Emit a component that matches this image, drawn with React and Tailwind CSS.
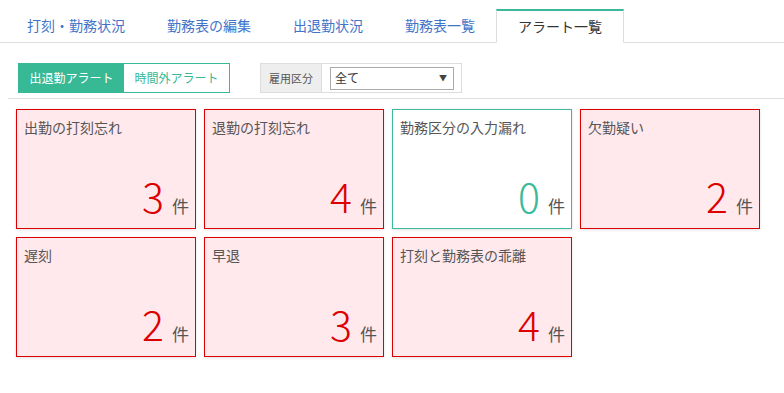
import React from "react";

const tabs = ["打刻・勤務状況", "勤務表の編集", "出退勤状況", "勤務表一覧", "アラート一覧"];

const cards = [
  { title: "出勤の打刻忘れ", n: 3, alert: true },
  { title: "退勤の打刻忘れ", n: 4, alert: true },
  { title: "勤務区分の入力漏れ", n: 0, alert: false },
  { title: "欠勤疑い", n: 2, alert: true },
  { title: "遅刻", n: 2, alert: true },
  { title: "早退", n: 3, alert: true },
  { title: "打刻と勤務表の乖離", n: 4, alert: true },
];

export default function App() {
  return (
    <div className="w-[784px] h-[393px] bg-white overflow-hidden font-['Noto_Sans_CJK_JP','Noto_Sans',sans-serif]">
      <div className="flex pt-[9px] pl-[6px] border-b border-[#dddddd]">
        {tabs.map((t, i) =>
          i === tabs.length - 1 ? (
            <div
              key={t}
              className="-mb-px h-[34px] px-[21px] flex items-center bg-white border border-[#dddddd] border-t-2 border-t-[#3bb99a] border-b-white text-[14px] text-[#333333]"
            >
              {t}
            </div>
          ) : (
            <div key={t} className="h-[33px] px-[21px] flex items-center text-[14px] text-[#3f74c9]">
              {t}
            </div>
          )
        )}
      </div>

      <div className="ml-[8px] pl-[10px] pt-[20px] pb-[5px] border-b border-[#dddddd] flex items-center gap-[30px]">
        <div className="flex h-[30px] border border-[#38b996]">
          <div className="w-[105px] flex items-center justify-center bg-[#38b996] text-white text-[12px]">出退勤アラート</div>
          <div className="w-[105px] flex items-center justify-center bg-white text-[#38b996] text-[12px]">時間外アラート</div>
        </div>
        <div className="flex h-[30px] w-[202px] border border-[#dddddd] items-center">
          <div className="h-full w-[61px] flex items-center justify-center bg-[#eeeeee] border-r border-[#dddddd] text-[11px] text-[#555555]">
            雇用区分
          </div>
          <div className="ml-[8px] w-[124px] h-[23px] border border-[#aaaaaa] flex items-center justify-between pl-[4px] pr-[6px] text-[12px] text-[#333333]">
            <span>全て</span>
            <span className="text-[8px] text-[#444444]">▼</span>
          </div>
        </div>
      </div>

      <div className="grid grid-cols-[repeat(4,180px)] gap-x-[8px] gap-y-[8px] pl-[16px] pt-[10px]">
        {cards.map((c) => (
          <div
            key={c.title}
            className={
              c.alert
                ? "h-[120px] flex flex-col justify-between border border-[#dd0000] bg-[#ffe9ec] shadow-[0_1px_3px_rgba(0,0,0,0.12)]"
                : "h-[120px] flex flex-col justify-between border border-[#3bb99a] bg-white shadow-[0_1px_3px_rgba(0,0,0,0.12)]"
            }
          >
            <div className="pl-[7px] pt-[8px] text-[14px] leading-[18px] text-[#555555]">{c.title}</div>
            <div className="flex justify-end items-baseline pr-[6px] pb-[12px]">
              <span
                className={
                  c.alert
                    ? "text-[41px] leading-[40px] font-light text-[#dd0000]"
                    : "text-[41px] leading-[40px] font-light text-[#3bb99a]"
                }
              >
                {c.n}
              </span>
              <span className="ml-[8px] text-[17px] leading-[20px] text-[#555555]">件</span>
            </div>
          </div>
        ))}
      </div>
    </div>
  );
}
